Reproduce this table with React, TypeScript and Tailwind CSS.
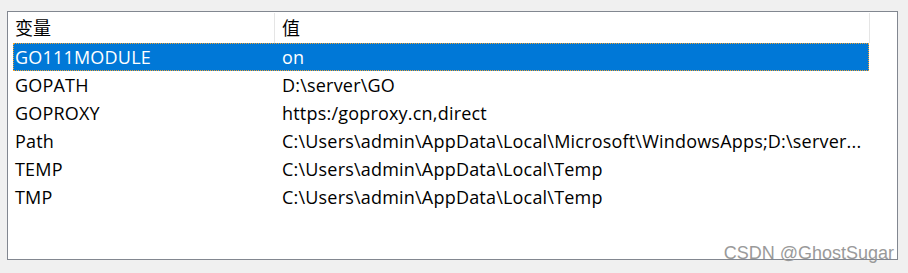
import React from "react";

const rows: [string, string][] = [
  ["GO111MODULE", "on"],
  ["GOPATH", "D:\\server\\GO"],
  ["GOPROXY", "https:/goproxy.cn,direct"],
  ["Path", "C:\\Users\\admin\\AppData\\Local\\Microsoft\\WindowsApps;D:\\server..."],
  ["TEMP", "C:\\Users\\admin\\AppData\\Local\\Temp"],
  ["TMP", "C:\\Users\\admin\\AppData\\Local\\Temp"],
];

const font = { fontFamily: '"Open Sans", "Noto Sans CJK SC", sans-serif' };

export default function App() {
  return (
    <div className="w-[908px] h-[273px] bg-[#f0f0f0] pt-[11px] pl-[7px]" style={font}>
      <div className="relative w-[891px] h-[249px] border border-[#828790] bg-white pl-[5px]">
        <div className="flex h-[31px] items-center text-[18px] text-black">
          <div className="w-[261px] pl-[2px] leading-none">变量</div>
          <div className="w-px h-[30px] self-end bg-[#e5e5e5]" />
          <div className="w-[594px] pl-[7px] leading-none">值</div>
          <div className="w-px h-[30px] self-end bg-[#e5e5e5]" />
        </div>
        {rows.map(([k, v], i) => (
          <div
            key={k}
            className={
              "flex h-[28px] w-[856px] items-center text-[18px] tracking-[0.2px] whitespace-nowrap " +
              (i === 0
                ? "bg-[#0078d7] text-white outline-1 outline-dotted outline-[#f0a030] -outline-offset-1"
                : "text-black")
            }
          >
            <div className="w-[262px] pl-[2px]">{k}</div>
            <div className="pl-[7px]">{v}</div>
          </div>
        ))}
        <div className="absolute right-[3px] bottom-[-3px] text-[18px] leading-none text-[#9a9a9a]" style={{ fontFamily: '"Liberation Sans", sans-serif' }}>
          CSDN @GhostSugar
        </div>
      </div>
    </div>
  );
}
